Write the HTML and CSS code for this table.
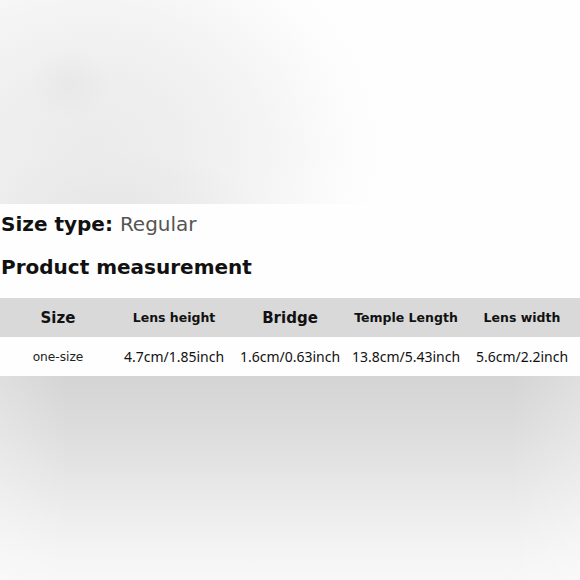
FILE: index.html
```html
<!DOCTYPE html>
<html lang="en">
<head>
<meta charset="utf-8">
<link rel="stylesheet" href="styles.css">
</head>
<body>
<div class="page">
  <div class="hero"></div>
  <section class="info">
    <p class="line"><span class="label">Size type:</span> <span class="value">Regular</span></p>
    <p class="line">Product measurement</p>
  </section>
  <table class="sizes">
    <thead>
      <tr>
        <th class="big">Size</th>
        <th>Lens height</th>
        <th class="big">Bridge</th>
        <th>Temple Length</th>
        <th>Lens width</th>
      </tr>
    </thead>
    <tbody>
      <tr>
        <td class="first">one-size</td>
        <td>4.7cm/1.85inch</td>
        <td>1.6cm/0.63inch</td>
        <td>13.8cm/5.43inch</td>
        <td>5.6cm/2.2inch</td>
      </tr>
    </tbody>
  </table>
  <div class="footer"></div>
</div>
</body>
</html>
```

FILE: styles.css
```css
html, body {
  margin: 0;
  padding: 0;
  width: 580px;
  height: 580px;
  overflow: hidden;
  background: #fefefe;
}
.page {
  display: flex;
  flex-direction: column;
  height: 580px;
}
.hero {
  height: 204px;
  flex: none;
  background:
    radial-gradient(ellipse 40px 35px at 70px 85px, rgba(230,230,230,0.7), rgba(230,230,230,0) 100%),
    radial-gradient(ellipse 150px 60px at 110px 210px, rgba(230,230,230,0.9), rgba(230,230,230,0) 100%),
    radial-gradient(ellipse 290px 240px at 90px 150px, #ebebeb 0%, #eeeeee 30%, #f4f4f4 60%, #fbfbfb 85%, #fefefe 100%);
}
.info {
  padding: 8px 1px 0;
  font-family: "DejaVu Sans", sans-serif;
}
.line {
  margin: 0 0 19px;
  font-size: 20px;
  line-height: 24px;
  font-weight: bold;
  color: #111;
  white-space: nowrap;
}
.value {
  font-weight: normal;
  color: #555;
}
.sizes {
  width: 580px;
  border-collapse: collapse;
  table-layout: fixed;
  flex: none;
}
.sizes th, .sizes td {
  width: 116px;
  padding: 0;
  text-align: center;
  white-space: nowrap;
  height: 39px;
}
.sizes th {
  background: #d9d9d9;
  font-family: "DejaVu Sans", sans-serif;
  font-weight: bold;
  font-size: 12.5px;
  color: #111;
}
.sizes th.big {
  font-size: 15px;
}
.sizes td {
  background: #fefefe;
  font-family: "Noto Sans", sans-serif;
  font-size: 14px;
  color: #111;
}
.sizes td.first {
  font-family: "DejaVu Sans", sans-serif;
  font-size: 12.2px;
  color: #222;
}
.footer {
  flex: 1;
  background:
    linear-gradient(90deg, rgba(255,255,255,0.25), rgba(255,255,255,0) 12%, rgba(255,255,255,0) 88%, rgba(255,255,255,0.25)),
    linear-gradient(180deg, #d4d4d4 0%, #dcdcdc 25%, #e6e6e6 50%, #efefef 72%, #f5f5f5 90%, #f7f7f7 100%);
}
```
